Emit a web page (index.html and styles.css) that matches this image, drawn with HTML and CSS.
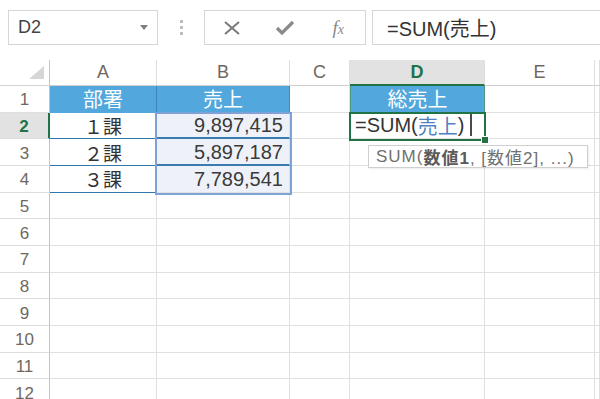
FILE: index.html
```html
<!DOCTYPE html>
<html lang="ja">
<head>
<meta charset="utf-8">
<title>Excel SUM</title>
<link rel="stylesheet" href="styles.css">
</head>
<body>
<div class="app">
  <div class="toolbar">
    <div class="namebox"><span class="ref">D2</span><span class="dd"></span></div>
    <div class="grip"><i></i><i></i><i></i></div>
    <div class="btns">
      <span class="ico"><svg width="18" height="14" viewBox="0 0 18 14"><path d="M2 1 L16 13 M16 1 L2 13" stroke="#7a7a7a" stroke-width="2" fill="none"/></svg></span>
      <span class="ico"><svg width="20" height="16" viewBox="0 0 20 16"><path d="M2 8 L7 13 L18 2" stroke="#8a8a8a" stroke-width="3.2" fill="none"/></svg></span>
      <span class="ico fx"><span class="f">f</span><span class="x">x</span></span>
    </div>
    <div class="fbar">=SUM(売上)</div>
  </div>
  <div class="sheet">
    <div class="corner"></div><div class="ch">A</div><div class="ch">B</div><div class="ch">C</div><div class="ch sel">D</div><div class="ch">E</div><div class="ch"></div>

    <div class="rh">1</div><div class="c hd">部署</div><div class="c hd">売上</div><div class="c"></div><div class="c hd tot">総売上</div><div class="c"></div><div class="c"></div>

    <div class="rh sel">2</div><div class="c dept">１課</div><div class="c num">9,897,415</div><div class="c"></div><div class="c edit">=SUM(<span class="refc">売上</span>)<span class="caret"></span></div><div class="c"></div><div class="c"></div>

    <div class="rh">3</div><div class="c dept">２課</div><div class="c num">5,897,187</div><div class="c"></div><div class="c"></div><div class="c"></div><div class="c"></div>

    <div class="rh">4</div><div class="c dept">３課</div><div class="c num last">7,789,541</div><div class="c"></div><div class="c"></div><div class="c"></div><div class="c"></div>

    <div class="rh">5</div><div class="c"></div><div class="c"></div><div class="c"></div><div class="c"></div><div class="c"></div><div class="c"></div>
    <div class="rh">6</div><div class="c"></div><div class="c"></div><div class="c"></div><div class="c"></div><div class="c"></div><div class="c"></div>
    <div class="rh">7</div><div class="c"></div><div class="c"></div><div class="c"></div><div class="c"></div><div class="c"></div><div class="c"></div>
    <div class="rh">8</div><div class="c"></div><div class="c"></div><div class="c"></div><div class="c"></div><div class="c"></div><div class="c"></div>
    <div class="rh">9</div><div class="c"></div><div class="c"></div><div class="c"></div><div class="c"></div><div class="c"></div><div class="c"></div>
    <div class="rh">10</div><div class="c"></div><div class="c"></div><div class="c"></div><div class="c"></div><div class="c"></div><div class="c"></div>
    <div class="rh">11</div><div class="c"></div><div class="c"></div><div class="c"></div><div class="c"></div><div class="c"></div><div class="c"></div>
    <div class="rh">12</div><div class="c"></div><div class="c"></div><div class="c"></div><div class="c"></div><div class="c"></div><div class="c"></div>

    <div class="refbox"></div>
    <div class="active"><span class="handle"></span></div>
    <div class="tip">SUM(<b>数値1</b>, [数値2], ...)</div>
  </div>
</div>
</body>
</html>
```

FILE: styles.css
```css
html, body {
  margin: 0;
  padding: 0;
  background: #fff;
}
body {
  width: 600px;
  height: 399px;
  overflow: hidden;
  font-family: "Liberation Sans", "Noto Sans CJK JP", sans-serif;
}
.app {
  width: 600px;
  height: 399px;
  overflow: hidden;
}

/* toolbar */
.toolbar {
  display: flex;
  align-items: center;
  height: 35px;
  padding: 10px 0 15px 8px;
}
.namebox {
  width: 150px;
  height: 35px;
  box-sizing: border-box;
  border: 1px solid #d6d6d6;
  display: flex;
  align-items: center;
  justify-content: space-between;
  padding: 0 9px 0 9px;
  font-size: 18px;
  color: #444;
}
.dd {
  width: 0;
  height: 0;
  border-left: 4px solid transparent;
  border-right: 4px solid transparent;
  border-top: 5px solid #7d7d7d;
}
.grip {
  display: flex;
  flex-direction: column;
  gap: 3px;
  margin: 0 21px 0 22px;
}
.grip i {
  display: block;
  width: 3px;
  height: 3px;
  background: #bdbdbd;
}
.btns {
  width: 162px;
  height: 35px;
  box-sizing: border-box;
  border: 1px solid #d6d6d6;
  display: flex;
  align-items: center;
}
.ico {
  flex: 1;
  display: flex;
  align-items: center;
  justify-content: center;
}
.fx {
  font-family: "Liberation Serif", serif;
  font-style: italic;
  color: #8a8a8a;
  font-size: 19px;
}
.fx .x {
  font-size: 14px;
  margin-top: 5px;
}
.fbar {
  flex: 1;
  margin-left: 6px;
  height: 35px;
  box-sizing: border-box;
  border: 1px solid #d6d6d6;
  border-right: none;
  display: flex;
  align-items: center;
  padding-left: 14px;
  font-size: 20px;
  color: #333;
}

/* sheet */
.sheet {
  position: relative;
  display: grid;
  grid-template-columns: 50px 107px 133px 60px 135px 110px 1fr;
  grid-template-rows: 26px repeat(12, 26.67px);
}
.sheet > div {
  box-sizing: border-box;
}
.corner {
  position: relative;
  border-right: 1px solid #c4c4c4;
  border-bottom: 1px solid #d4d4d4;
}
.corner::after {
  content: "";
  position: absolute;
  right: 5px;
  bottom: 6px;
  width: 15px;
  height: 13px;
  background: #d6d6d6;
  clip-path: polygon(100% 0, 100% 100%, 0 100%);
}
.ch {
  display: flex;
  align-items: center;
  justify-content: center;
  font-size: 18px;
  color: #6f6862;
  border-right: 1px solid #dedede;
  border-bottom: 1px solid #cfcfcf;
}
.ch.sel {
  background: #e2e2e2;
  color: #217346;
  font-weight: bold;
  border-bottom: 2px solid #217346;
}
.rh {
  display: flex;
  align-items: center;
  justify-content: center;
  padding-top: 3px;
  font-size: 17px;
  color: #6f6862;
  border-right: 1px solid #c4c4c4;
  border-bottom: 1px solid #dedede;
}
.rh.sel {
  background: #e2e2e2;
  color: #217346;
  font-weight: bold;
  border-right: 2px solid #217346;
}
.c {
  display: flex;
  align-items: center;
  border-right: 1px solid #e0e0e0;
  border-bottom: 1px solid #e0e0e0;
  color: #333;
  white-space: nowrap;
}
.hd {
  background: #52a7dc;
  color: #fff;
  justify-content: center;
  font-size: 20px;
  font-family: "Noto Sans CJK JP", sans-serif;
  border-right: 1px solid #3a88bf;
  border-bottom: 1px solid #52a7dc;
}
.tot {
  border-left: 1px solid #4b9a7c;
  border-right: 1px solid #4b9a7c;
}
.dept {
  justify-content: center;
  font-size: 19px;
  font-family: "Noto Sans CJK JP", sans-serif;
  border-bottom: 1px solid #2f78ad;
}
.num {
  justify-content: flex-end;
  padding-right: 6px;
  padding-top: 2px;
  font-size: 20px;
  color: #3a3a3a;
  background: #eef2f8;
  border-bottom: 2px solid #3a7cb0;
}
.num.last {
  border-bottom: 1px solid #e0e0e0;
}
.edit {
  padding-left: 5px;
  font-size: 20px;
  color: #333;
}
.refc {
  color: #4f7fc4;
}
.caret {
  display: inline-block;
  width: 2px;
  height: 22px;
  margin-left: 6px;
  background: #4a4a4a;
}

/* overlays */
.refbox {
  position: absolute;
  left: 155px;
  top: 51.5px;
  width: 137px;
  height: 83px;
  box-sizing: border-box;
  border: 2px solid #7ea2d8;
}
.active {
  position: absolute;
  left: 349px;
  top: 51.5px;
  width: 137px;
  height: 29.5px;
  box-sizing: border-box;
  border: 2px solid #217346;
}
.handle {
  position: absolute;
  right: -5px;
  bottom: -5px;
  width: 6px;
  height: 6px;
  background: #217346;
  border: 1px solid #fff;
}
.tip {
  position: absolute;
  left: 368px;
  top: 85px;
  width: 220px;
  height: 23px;
  box-sizing: border-box;
  padding: 0 0 0 7px;
  display: flex;
  align-items: center;
  border: 1px solid #cfcfcf;
  background: #fff;
  color: #707070;
  font-size: 17px;
  letter-spacing: 1px;
  white-space: nowrap;
  box-shadow: 1px 1px 2px rgba(0,0,0,0.08);
}
.tip b {
  font-weight: bold;
  color: #5a5a5a;
}
```
